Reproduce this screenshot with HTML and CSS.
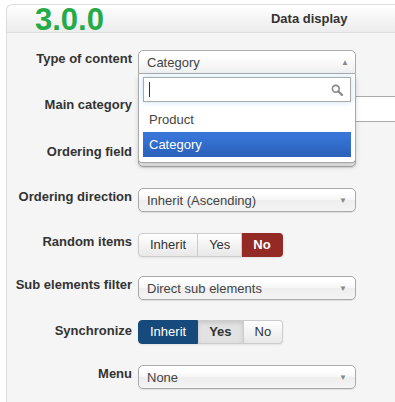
FILE: index.html
```html
<!DOCTYPE html>
<html lang="en">
<head>
    <meta charset="UTF-8">
    <meta name="viewport" content="width=device-width, initial-scale=1.0">
    <title>Data display</title>
    <link rel="stylesheet" href="styles.css">
</head>
<body>
    <div class="panel">
        <div class="panel-head">
            <span class="version">3.0.0</span>
            <span class="panel-title">Data display</span>
        </div>
        <div class="panel-body">
            <div class="row">
                <label class="label">Type of content</label>
                <div class="chosen">
                    <div class="chosen-single">
                        <span>Category</span>
                        <span class="arrow">&#9650;</span>
                    </div>
                    <div class="chosen-drop">
                        <div class="chosen-search">
                            <span class="caret"></span>
                            <svg class="search-icon" width="12" height="12" viewBox="0 0 12 12">
                                <circle cx="4.8" cy="4.8" r="3.4" fill="none" stroke="#888" stroke-width="1.6"/>
                                <line x1="7.3" y1="7.3" x2="11" y2="11" stroke="#888" stroke-width="2.2" stroke-linecap="round"/>
                            </svg>
                        </div>
                        <ul class="chosen-results">
                            <li>Product</li>
                            <li class="highlighted">Category</li>
                        </ul>
                    </div>
                </div>
            </div>
            <div class="row row-22">
                <label class="label">Main category</label>
                <div class="text-input"></div>
            </div>
            <div class="row row-23">
                <label class="label">Ordering field</label>
                <div class="select"></div>
            </div>
            <div class="row">
                <label class="label">Ordering direction</label>
                <div class="select"><span>Inherit (Ascending)</span><span class="arrow">&#9660;</span></div>
            </div>
            <div class="row">
                <label class="label">Random items</label>
                <div class="btn-group">
                    <span class="btn">Inherit</span>
                    <span class="btn">Yes</span>
                    <span class="btn btn-danger">No</span>
                </div>
            </div>
            <div class="row row-19">
                <label class="label">Sub elements filter</label>
                <div class="select"><span>Direct sub elements</span><span class="arrow">&#9660;</span></div>
            </div>
            <div class="row row-20">
                <label class="label label-low">Synchronize</label>
                <div class="btn-group">
                    <span class="btn btn-primary">Inherit</span>
                    <span class="btn btn-active">Yes</span>
                    <span class="btn">No</span>
                </div>
            </div>
            <div class="row">
                <label class="label">Menu</label>
                <div class="select"><span>None</span><span class="arrow">&#9660;</span></div>
            </div>
        </div>
    </div>
</body>
</html>
```
FILE: styles.css
```css
body {
    margin: 0;
    font-family: "Liberation Sans", Arial, sans-serif;
    font-size: 13px;
    color: #333;
    background: #fff;
    overflow: hidden;
}
.panel {
    margin: 4px 0 0 6px;
    width: 430px;
    border-left: 1px solid #ddd;
    border-top: 1px solid #ddd;
    border-top-left-radius: 6px;
    background: #f5f5f5;
    height: 400px;
}
.panel-head {
    height: 27px;
    display: flex;
    align-items: center;
    background: linear-gradient(#fff, #ececec);
    border-bottom: 1px solid #ddd;
    border-top-left-radius: 6px;
}
.version {
    margin-left: 28px;
    font-size: 31px;
    font-weight: bold;
    color: #24ab48;
    line-height: 27px;
    position: relative;
    top: 1px;
}
.panel-title {
    margin-left: 167px;
    font-weight: bold;
    color: #333;
}
.panel-body {
    display: flex;
    flex-direction: column;
    padding-top: 17px;
}
.row {
    display: flex;
    align-items: flex-start;
    height: 24px;
    margin-top: 21px;
}
.row:first-child {
    margin-top: 0;
}
.row-19 { margin-top: 19px; }
.row-20 { margin-top: 20px; }
.row-22 { margin-top: 22px; }
.row-23 { margin-top: 23px; }
.label {
    width: 125px;
    margin-right: 6px;
    padding-top: 1px;
    text-align: right;
    font-weight: bold;
    color: #333;
}
.label-low {
    padding-top: 3px;
}
.select, .chosen-single {
    box-sizing: border-box;
    width: 218px;
    height: 24px;
    display: flex;
    align-items: center;
    justify-content: space-between;
    padding: 0 8px 0 8px;
    border: 1px solid #aaa;
    border-radius: 5px;
    background: linear-gradient(#fff 20%, #f6f6f6 50%, #eee 52%, #f4f4f4);
    box-shadow: 0 1px 1px rgba(0, 0, 0, 0.1);
    color: #444;
}
.arrow {
    font-size: 8px;
    color: #888;
}
.chosen {
    position: relative;
    z-index: 2;
}
.chosen-single {
    padding-right: 6px;
    border-radius: 5px 5px 0 0;
    background: linear-gradient(#fff 20%, #f8f8f8 60%, #eee);
    box-shadow: 0 1px 0 #fff inset;
}
.chosen-drop {
    position: absolute;
    top: 24px;
    left: 0;
    box-sizing: border-box;
    width: 218px;
    padding: 3px 4px 5px;
    background: #fff;
    border: 1px solid #aaa;
    border-top: 0;
    border-radius: 0 0 4px 4px;
    box-shadow: 0 4px 5px rgba(0, 0, 0, 0.15);
}
.chosen-search {
    box-sizing: border-box;
    height: 25px;
    display: flex;
    align-items: center;
    justify-content: space-between;
    padding: 0 7px 0 5px;
    border: 1px solid #aaa;
    box-shadow: 0 0 6px rgba(82, 168, 236, 0.35);
}
.caret {
    width: 1px;
    height: 15px;
    background: #333;
}
.chosen-results {
    list-style: none;
    margin: 5px 0 0;
    padding: 0;
}
.chosen-results li {
    height: 25px;
    line-height: 25px;
    padding-left: 6px;
    color: #444;
}
.chosen-results li.highlighted {
    background: linear-gradient(#3875d7 20%, #2a62bc 90%);
    color: #fff;
}
.text-input {
    width: 270px;
    height: 24px;
    background: #fff;
    border: 1px solid #aaa;
}
.btn-group {
    display: flex;
    border-radius: 4px;
    box-shadow: 0 1px 2px rgba(0, 0, 0, 0.08);
}
.btn {
    box-sizing: border-box;
    height: 24px;
    line-height: 22px;
    padding: 0 11px;
    border: 1px solid #ccc;
    border-left-width: 0;
    background: linear-gradient(#fff, #e8e8e8);
    color: #333;
}
.btn:first-child {
    border-left-width: 1px;
    border-radius: 4px 0 0 4px;
}
.btn:last-child {
    border-radius: 0 4px 4px 0;
}
.btn-danger {
    background: #942a25;
    border-color: #942a25;
    color: #fff;
    font-weight: bold;
}
.btn-primary {
    background: #174a7c;
    border-color: #174a7c;
    color: #fff;
}
.btn-active {
    background: #e2e2e2;
    box-shadow: 0 2px 4px rgba(0, 0, 0, 0.12) inset;
    font-weight: bold;
}
```
